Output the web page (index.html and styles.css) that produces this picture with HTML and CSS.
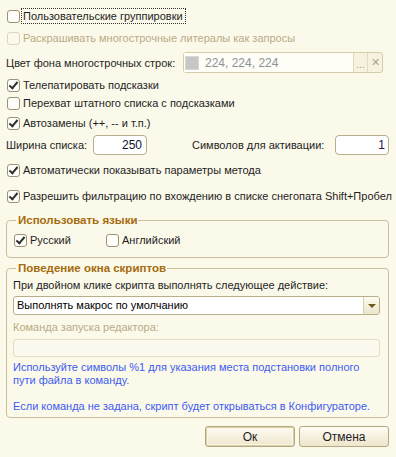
FILE: index.html
```html
<!DOCTYPE html>
<html lang="ru">
<head>
    <meta charset="UTF-8">
    <title>Настройки</title>
    <link rel="stylesheet" href="styles.css">
</head>
<body>
    <div class="dialog">
        <div class="row r1">
            <span class="box"></span>
            <span class="focus">Пользовательские группировки</span>
        </div>
        <div class="row r2 disabled">
            <span class="box"></span>
            <span>Раскрашивать многострочные литералы как запросы</span>
        </div>
        <div class="row r3">
            <span class="color-label">Цвет фона многострочных строк:</span>
            <div class="color-field">
                <div class="color-value">
                    <span class="swatch"></span>
                    <span>224, 224, 224</span>
                </div>
                <span class="field-btn dots">...</span>
                <span class="field-btn">&#x2715;</span>
            </div>
        </div>
        <div class="row r4">
            <span class="box checked"></span>
            <span>Телепатировать подсказки</span>
        </div>
        <div class="row r5">
            <span class="box"></span>
            <span>Перехват штатного списка с подсказками</span>
        </div>
        <div class="row r6">
            <span class="box checked"></span>
            <span>Автозамены (++, -- и т.п.)</span>
        </div>
        <div class="row r7">
            <span class="width-label">Ширина списка:</span>
            <span class="num-input">250</span>
            <span class="chars-label">Символов для активации:</span>
            <span class="num-input one">1</span>
        </div>
        <div class="row r8">
            <span class="box checked"></span>
            <span>Автоматически показывать параметры метода</span>
        </div>
        <div class="row r9">
            <span class="box checked"></span>
            <span>Разрешить фильтрацию по вхождению в списке снегопата Shift+Пробел</span>
        </div>

        <fieldset class="group langs">
            <legend>Использовать языки</legend>
            <div class="lang-row">
                <div class="row lang-ru">
                    <span class="box checked"></span>
                    <span>Русский</span>
                </div>
                <div class="row">
                    <span class="box"></span>
                    <span>Английский</span>
                </div>
            </div>
        </fieldset>

        <fieldset class="group scripts">
            <legend>Поведение окна скриптов</legend>
            <div class="line">При двойном клике скрипта выполнять следующее действие:</div>
            <div class="select">
                <span class="select-text">Выполнять макрос по умолчанию</span>
                <span class="select-btn"><span class="arrow"></span></span>
            </div>
            <div class="line disabled cmd-label">Команда запуска редактора:</div>
            <div class="cmd-input"></div>
            <div class="hint">Используйте символы %1 для указания места подстановки полного<br>пути файла в команду.<br><br>Если команда не задана, скрипт будет открываться в Конфигураторе.</div>
        </fieldset>

        <div class="buttons">
            <button class="btn default">Ок</button>
            <button class="btn">Отмена</button>
        </div>
    </div>
</body>
</html>
```

FILE: styles.css
```css
body {
    margin: 0;
    background: #fbf9ea;
    font-family: "Liberation Sans", Arial, sans-serif;
    font-size: 11px;
    color: #1e1e1e;
}

.dialog {
    display: flex;
    flex-direction: column;
    padding: 7px 7px 0 6px;
}

.row {
    display: flex;
    align-items: center;
    height: 18px;
    white-space: nowrap;
}

.r2 { margin-top: 4px; }
.r3 { margin-top: 5px; height: 21px; }
.r4 { margin-top: 3px; }
.r5 { margin-top: 0; }
.r6 { margin-top: 2px; }
.r7 { margin-top: 3px; height: 20px; }
.r8 { margin-top: 6px; }
.r9 { margin-top: 8px; }

.disabled { color: #b9ab86; }

/* чекбоксы */
.box {
    width: 11px;
    height: 11px;
    margin: 0 3px 0 1px;
    border: 1px solid #9a937a;
    border-radius: 3px;
    background: #fffef8;
    flex: none;
    position: relative;
}

.disabled .box { border-color: #dcd5bb; background: #fbf9ee; }

.box.checked::after {
    content: "";
    position: absolute;
    left: 3px;
    top: 0;
    width: 3px;
    height: 7px;
    border: solid #303030;
    border-width: 0 2px 2px 0;
    transform: rotate(40deg);
}

.focus {
    outline: 1px dotted #333;
    outline-offset: 1px;
    padding-right: 1px;
}

/* поле цвета */
.color-label { width: 177px; }

.color-field {
    display: flex;
    width: 198px;
    height: 19px;
    border: 1px solid #d5cca8;
    border-radius: 3px;
    background: #f6f2df;
}

.color-value {
    flex: 1;
    display: flex;
    align-items: center;
    background: #fefdf6;
    border-right: 1px solid #e2dbc0;
    color: #8d919c;
    font-size: 12px;
}

.swatch {
    width: 14px;
    height: 14px;
    background: #c6c6c6;
    margin: 0 6px 0 1px;
    border: 1px solid #d8d8d8;
    box-sizing: border-box;
}

.field-btn {
    width: 14px;
    display: flex;
    align-items: center;
    justify-content: center;
    color: #a9a390;
    font-size: 11px;
}

.field-btn.dots {
    border-right: 1px solid #e2dbc0;
    align-items: flex-end;
    padding-bottom: 2px;
    box-sizing: border-box;
}

/* числовые поля */
.width-label { width: 87px; }
.chars-label { width: 143px; margin-left: 45px; }

.num-input {
    display: block;
    width: 48px;
    height: 18px;
    padding-right: 4px;
    border: 1px solid #b8ae8a;
    border-radius: 4px;
    background: #fff;
    text-align: right;
    line-height: 18px;
    font-size: 12px;
    color: #101030;
}

.num-input.one { color: #2a1040; padding-right: 3px; width: 49px; }

/* группы */
.group {
    margin: 0;
    min-width: 0;
    border: 1px solid #c9bf98;
    border-radius: 4px;
    padding: 0 8px 0 6px;
}

.group legend {
    font-weight: bold;
    font-size: 11.5px;
    color: #a56b0c;
    line-height: 16px;
    padding: 0 1px 0 2px;
    margin-left: 3px;
}

.langs { margin-top: 7px; padding-top: 3px; padding-bottom: 8px; }

.lang-row { display: flex; }
.lang-ru { width: 92px; }

.scripts { margin-top: 2px; padding-top: 1px; padding-bottom: 4px; }

.line { height: 16px; line-height: 16px; white-space: nowrap; }

.select {
    display: flex;
    margin-top: 3px;
    height: 17px;
    border: 1px solid #b8ae8a;
    border-radius: 3px;
    background: #fff;
}

.select-text {
    flex: 1;
    line-height: 17px;
    padding-left: 3px;
    color: #000;
}

.select-btn {
    width: 15px;
    border-left: 1px solid #d6cdaa;
    background: linear-gradient(#fdfbf1, #ece5c9);
    display: flex;
    align-items: center;
    justify-content: center;
    border-radius: 0 2px 2px 0;
}

.arrow {
    width: 0;
    height: 0;
    border-left: 4px solid transparent;
    border-right: 4px solid transparent;
    border-top: 4px solid #6e5a1c;
}

.cmd-label { margin-top: 4px; }

.cmd-input {
    margin-top: 4px;
    height: 16px;
    border: 1px solid #e3dcc2;
    border-radius: 3px;
    background: #fbf9ee;
}

.hint {
    margin-top: 4px;
    line-height: 13px;
    color: #3d5cf2;
    white-space: nowrap;
}

/* кнопки */
.buttons {
    display: flex;
    justify-content: flex-end;
    gap: 4px;
    margin-top: 8px;
}

.btn {
    width: 90px;
    height: 21px;
    border: 1px solid #b3a983;
    border-radius: 3px;
    background: linear-gradient(#fefcf4, #ede6cb);
    font-family: "Liberation Sans", Arial, sans-serif;
    font-size: 12px;
    color: #1e1e1e;
    padding: 0;
}

.btn.default {
    box-shadow: inset 0 0 0 1px #d9cea4, inset 0 0 0 2px #fbf7e6;
}
```
